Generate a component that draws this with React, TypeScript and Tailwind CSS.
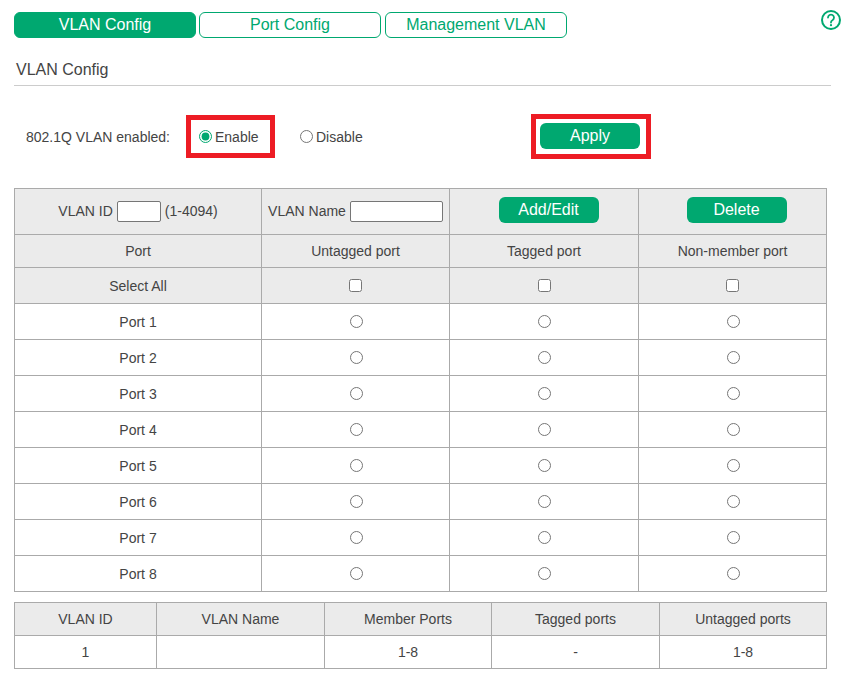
const ports = [1, 2, 3, 4, 5, 6, 7, 8];

const cell = "border border-[#aaaaaa] text-center font-normal p-0";

function Tab({ label, active, className }: { label: string; active?: boolean; className: string }) {
  return (
    <button
      className={`h-[26px] rounded-[6px] border border-[#00a870] text-base leading-[24px] ${
        active ? "bg-[#00a870] text-white" : "bg-white text-[#00a870]"
      } ${className}`}
    >
      {label}
    </button>
  );
}

function GreenButton({ label, className = "" }: { label: string; className?: string }) {
  return (
    <button className={`w-[100px] h-[26px] rounded-[6px] bg-[#00a870] text-white text-base leading-[26px] ${className}`}>
      {label}
    </button>
  );
}

function Radio({ name, checked, className = "" }: { name: string; checked?: boolean; className?: string }) {
  return <input type="radio" name={name} defaultChecked={checked} className={`m-0 w-[13px] h-[13px] accent-[#00a870] align-middle ${className}`} />;
}

function Check() {
  return <input type="checkbox" className="m-0 mb-[2px] w-[13px] h-[13px] align-middle" />;
}

export default function App() {
  return (
    <div className="relative w-[848px] h-[686px] bg-white text-[#444444] text-sm pl-[14px] pt-[12px] font-['Liberation_Sans',Arial,sans-serif]">
      <div className="flex">
        <Tab label="VLAN Config" active className="w-[182px]" />
        <Tab label="Port Config" className="w-[182px] ml-[3px]" />
        <Tab label="Management VLAN" className="w-[182px] ml-[4px]" />
      </div>
      <svg className="absolute left-[821px] top-[10px]" width="20" height="20" viewBox="0 0 20 20" fill="none">
        <circle cx="10" cy="10" r="9" stroke="#00a870" strokeWidth="2" />
        <path d="M7 7.6a3 3 0 1 1 4.5 2.6c-1 .6-1.5 1.1-1.5 2v.4" stroke="#00a870" strokeWidth="1.8" strokeLinecap="round" />
        <circle cx="10" cy="15.2" r="1.1" fill="#00a870" />
      </svg>

      <div className="w-[817px] h-[37px] mt-[11px] pl-[2px] border-b border-[#cccccc] text-base leading-[42px]">VLAN Config</div>

      <div className="flex items-center h-[45px] mt-[28px]">
        <span className="ml-[12px] w-[160px]">802.1Q VLAN enabled:</span>
        <div className="flex items-center w-[89px] h-[43px] border-[5px] border-[#ed1c24] pl-[8px]">
          <Radio name="vlan" checked />
          <span className="ml-[3px]">Enable</span>
        </div>
        <div className="flex items-center ml-[25px] w-[231px]">
          <Radio name="vlan" />
          <span className="ml-[3px]">Disable</span>
        </div>
        <div className="flex items-start w-[120px] h-[45px] border-[5px] border-[#ed1c24] pl-[4px] pt-[4px]">
          <GreenButton label="Apply" />
        </div>
      </div>

      <table className="w-[812px] mt-[29px] table-fixed border-collapse">
        <colgroup>
          <col className="w-[247px]" />
          <col className="w-[188px]" />
          <col className="w-[189px]" />
          <col className="w-[188px]" />
        </colgroup>
        <tbody>
          <tr className="h-[46px] bg-[#ebebeb]">
            <td className={cell}>
              VLAN ID
              <input className="w-[44px] h-[21px] mx-[4px] align-middle bg-white border border-[#767676] rounded-[2px]" />
              (1-4094)
            </td>
            <td className={cell}>
              VLAN Name
              <input className="w-[93px] h-[21px] ml-[4px] align-middle bg-white border border-[#767676] rounded-[2px]" />
            </td>
            <td className={cell}>
              <GreenButton label="Add/Edit" className="ml-[9px] mb-[4px]" />
            </td>
            <td className={cell}>
              <GreenButton label="Delete" className="ml-[8px] mb-[4px]" />
            </td>
          </tr>
          <tr className="h-[33px] bg-[#ebebeb]">
            <td className={cell}>Port</td>
            <td className={cell}>Untagged port</td>
            <td className={cell}>Tagged port</td>
            <td className={cell}>Non-member port</td>
          </tr>
          <tr className="h-[36px] bg-[#ebebeb]">
            <td className={cell}>Select All</td>
            <td className={cell}><Check /></td>
            <td className={cell}><Check /></td>
            <td className={cell}><Check /></td>
          </tr>
          {ports.map((p) => (
            <tr key={p} className="h-[36px]">
              <td className={cell}>Port {p}</td>
              <td className={cell}><Radio name={`port-${p}`} className="ml-[2px] mb-[2px]" /></td>
              <td className={cell}><Radio name={`port-${p}`} className="mb-[2px]" /></td>
              <td className={cell}><Radio name={`port-${p}`} className="ml-[2px] mb-[2px]" /></td>
            </tr>
          ))}
        </tbody>
      </table>

      <table className="w-[812px] mt-[10px] table-fixed border-collapse">
        <colgroup>
          <col className="w-[142px]" />
          <col className="w-[168px]" />
          <col className="w-[167px]" />
          <col className="w-[168px]" />
          <col className="w-[167px]" />
        </colgroup>
        <tbody>
          <tr className="h-[33px] bg-[#ebebeb]">
            <td className={cell}>VLAN ID</td>
            <td className={cell}>VLAN Name</td>
            <td className={cell}>Member Ports</td>
            <td className={cell}>Tagged ports</td>
            <td className={cell}>Untagged ports</td>
          </tr>
          <tr className="h-[33px]">
            <td className={cell}>1</td>
            <td className={cell}></td>
            <td className={cell}>1-8</td>
            <td className={cell}>-</td>
            <td className={cell}>1-8</td>
          </tr>
        </tbody>
      </table>
    </div>
  );
}
